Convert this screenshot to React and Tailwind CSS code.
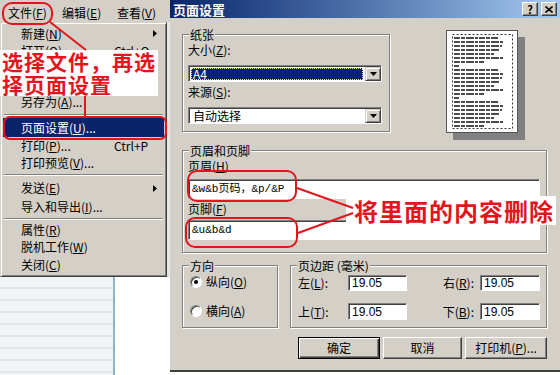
import React from "react";

const RED = "#e3141c";

function Arrow() {
  return (
    <svg width="4" height="7" viewBox="0 0 4 7" className="ml-auto mr-[5px]">
      <path d="M0 0L4 3.5L0 7Z" fill="#000" />
    </svg>
  );
}

function MI({ h, label, k, tail = "", shortcut, arrow, active }) {
  return (
    <div
      className={`${h} flex items-center pl-[18px] pr-[2px] whitespace-nowrap ${
        active ? "bg-[#0a246a] text-white" : ""
      }`}
    >
      <span className="w-[93px]">
        {label}(<span className="underline">{k}</span>){tail}
      </span>
      {shortcut && <span>{shortcut}</span>}
      {arrow && <Arrow />}
    </div>
  );
}

function Sep({ h }) {
  return (
    <div className={`${h} flex items-center px-[1px]`}>
      <div className="w-full h-[2px] border-t border-t-[#808080] border-b border-b-white" />
    </div>
  );
}

function Group({ title, className, children }) {
  return (
    <div
      className={`relative border border-[#808080] shadow-[inset_1px_1px_0_#fff,1px_1px_0_#fff] ${className}`}
    >
      <span className="absolute -top-[6px] left-[6px] px-[1px] bg-[#d4d0c8] leading-[12px] whitespace-nowrap">
        {title}
      </span>
      {children}
    </div>
  );
}

function DropBtn() {
  return (
    <div className="w-[16px] h-full bg-[#d4d0c8] border border-t-[#d4d0c8] border-l-[#d4d0c8] border-r-[#404040] border-b-[#404040] shadow-[inset_1px_1px_0_#fff,inset_-1px_-1px_0_#808080] flex items-center justify-center">
      <svg width="7" height="4" viewBox="0 0 7 4">
        <path d="M0 0H7L3.5 4Z" fill="#000" />
      </svg>
    </div>
  );
}

function Select({ value, active }) {
  return (
    <div className="h-[17px] flex bg-white border border-t-[#808080] border-l-[#808080] border-b-white border-r-white shadow-[inset_1px_1px_0_#404040] pt-[1px] pl-[1px]">
      <div className="flex-1 p-[1px] pr-[2px]">
        <div
          className={`h-full flex items-center pl-[2px] ${
            active ? "bg-[#0a246a] text-white outline-1 outline-dotted outline-[#f0e68c] -outline-offset-1" : ""
          }`}
        >
          {value}
        </div>
      </div>
      <DropBtn />
    </div>
  );
}

function Input({ h, w, children, mono }) {
  return (
    <div
      className={`${h} ${w} bg-white border border-t-[#808080] border-l-[#808080] border-b-white border-r-white shadow-[inset_1px_1px_0_#404040] flex items-center pl-[3px] whitespace-nowrap ${
        mono ? "text-[11px] [font-family:'Liberation_Mono','Noto_Sans_CJK_SC',monospace]" : "[font-family:'Liberation_Sans','Noto_Sans_CJK_SC',sans-serif]"
      }`}
    >
      {children}
    </div>
  );
}

function Radio({ on }) {
  return (
    <span className="w-[12px] h-[12px] rounded-full bg-white border border-t-[#808080] border-l-[#808080] border-b-white border-r-white shadow-[inset_1px_1px_0_#404040] flex items-center justify-center">
      {on && <span className="w-[4px] h-[4px] rounded-full bg-black" />}
    </span>
  );
}

function Btn({ w, children, def }) {
  return (
    <div
      className={`${w} h-[22px] bg-[#d4d0c8] flex items-center justify-center border ${
        def
          ? "border-black shadow-[inset_1px_1px_0_#fff,inset_-1px_-1px_0_#404040,inset_-2px_-2px_0_#808080]"
          : "border-t-white border-l-white border-r-[#404040] border-b-[#404040] shadow-[inset_-1px_-1px_0_#808080]"
      }`}
    >
      {children}
    </div>
  );
}

function TitleBtn({ children }) {
  return (
    <div className="w-[16px] h-[14px] bg-[#d4d0c8] border border-t-white border-l-white border-r-[#404040] border-b-[#404040] shadow-[inset_-1px_-1px_0_#808080] flex items-center justify-center text-[11px] font-bold text-black leading-none">
      {children}
    </div>
  );
}

function Preview() {
  const lens = [44, 50, 48, 46, 40, 50, 30, 5, 44, 50, 48, 46, 40, 50, 30, 5, 44, 50, 48, 46, 40, 50, 30];
  return (
    <svg width="79" height="110" viewBox="0 0 79 110">
      <rect x="7" y="7" width="72" height="103" fill="#808080" />
      <rect x="0.5" y="0.5" width="71" height="102" fill="#fff" stroke="#555" />
      <rect x="6.5" y="4.5" width="60" height="94" fill="none" stroke="#333" strokeDasharray="2 2" />
      {lens.map((l, i) => (
        <line
          key={i}
          x1="8"
          x2={8 + l}
          y1={8 + i * 4}
          y2={8 + i * 4}
          stroke="#111"
          strokeWidth="1.5"
          strokeDasharray="6 1 4 1 8 1 3 1"
        />
      ))}
    </svg>
  );
}

export default function App() {
  return (
    <div className="relative w-[560px] h-[375px] overflow-hidden flex bg-white text-[12px] leading-none text-black [font-family:'Noto_Sans_CJK_SC','Noto_Sans',sans-serif]">
      {/* left: menu */}
      <div className="w-[170px] shrink-0 flex flex-col">
        <div className="h-[22px] bg-[#d4d0c8] flex items-center pl-[8px] pt-[3px]">
          <span className="w-[54px]">
            文件(<span className="underline">F</span>)
          </span>
          <span className="w-[55px]">
            编辑(<span className="underline">E</span>)
          </span>
          <span>
            查看(<span className="underline">V</span>)
          </span>
        </div>
        <div className="flex">
          <div className="w-[167px] bg-[#d4d0c8] border border-t-[#d4d0c8] border-l-[#d4d0c8] border-r-[#404040] border-b-[#404040] shadow-[inset_1px_1px_0_#fff,inset_-1px_-1px_0_#808080] p-[2px] flex flex-col">
            <MI h="h-[17px]" label="新建" k="N" arrow />
            <MI h="h-[17px]" label="打开" k="O" tail="..." shortcut="Ctrl+O" />
            <div className="h-[34px]" />
            <MI h="h-[18px]" label="另存为" k="A" tail="..." />
            <Sep h="h-[7px]" />
            <MI h="h-[19px]" label="页面设置" k="U" tail="..." active />
            <MI h="h-[17px]" label="打印" k="P" tail="..." shortcut="Ctrl+P" />
            <MI h="h-[17px]" label="打印预览" k="V" tail="..." />
            <Sep h="h-[8px]" />
            <MI h="h-[18px]" label="发送" k="E" arrow />
            <MI h="h-[19px]" label="导入和导出" k="I" tail="..." />
            <Sep h="h-[5px]" />
            <MI h="h-[17px]" label="属性" k="R" />
            <MI h="h-[18px]" label="脱机工作" k="W" />
            <MI h="h-[18px]" label="关闭" k="C" />
          </div>
          <div className="flex-1 bg-[#e9e7e2]" />
        </div>
        <div className="flex-1 flex">
          <div className="w-[113px] bg-[repeating-linear-gradient(180deg,#f3f4f8_0px,#f3f4f8_10px,#e2e5ee_10px,#e2e5ee_12px)]" />
          <div className="w-[2px] bg-[#8db3c6]" />
          <div className="flex-1 bg-white" />
        </div>
      </div>

      {/* dialog */}
      <div className="w-[390px] shrink-0 h-[372px] bg-[#d4d0c8] flex flex-col border-b-2 border-b-[#404040]">
        <div className="h-[18px] bg-linear-to-r from-[#0a246a] to-[#a6caf0] flex items-center pl-[3px] pr-[3px]">
          <span className="text-white font-bold text-[13px]">页面设置</span>
          <div className="ml-auto flex gap-[3px]">
            <TitleBtn>?</TitleBtn>
            <TitleBtn>
              <svg width="8" height="7" viewBox="0 0 8 7">
                <path d="M0.5 0.5L7.5 6.5M7.5 0.5L0.5 6.5" stroke="#000" strokeWidth="1.6" />
              </svg>
            </TitleBtn>
          </div>
        </div>

        <div className="flex-1 flex flex-col pl-[12px] pr-[13px]">
          {/* row 1 */}
          <div className="h-[122px] flex items-start">
            <Group title="纸张" className="mt-[16px] w-[208px] h-[98px]">
              <div className="pt-[9px] pl-[5px] pr-[7px] flex flex-col">
                <div className="h-[12px]">
                  大小(<span className="underline">Z</span>):
                </div>
                <div className="mt-[9px]">
                  <Select value="A4" active />
                </div>
                <div className="h-[12px] mt-[4px]">
                  来源(<span className="underline">S</span>):
                </div>
                <div className="mt-[9px]">
                  <Select value="自动选择" />
                </div>
              </div>
            </Group>
            <div className="mt-[12px] ml-[56px]">
              <Preview />
            </div>
          </div>

          {/* row 2 */}
          <Group title="页眉和页脚" className="mt-[10px] h-[103px]">
            <div className="pt-[9px] pl-[5px] pr-[6px] flex flex-col">
              <div className="h-[12px]">
                页眉(<span className="underline">H</span>)
              </div>
              <div className="mt-[7px]">
                <Input h="h-[20px]" w="w-full" mono>
                  &amp;w&amp;b页码，&amp;p/&amp;P
                </Input>
              </div>
              <div className="h-[12px] mt-[4px]">
                页脚(<span className="underline">F</span>)
              </div>
              <div className="mt-[5px]">
                <Input h="h-[20px]" w="w-full" mono>
                  &amp;u&amp;b&amp;d
                </Input>
              </div>
            </div>
          </Group>

          {/* row 3 */}
          <div className="mt-[12px] h-[63px] flex gap-[12px]">
            <Group title="方向" className="w-[96px] h-[63px]">
              <div className="pt-[10px] pl-[7px] flex flex-col">
                <div className="h-[12px] flex items-center gap-[4px]">
                  <Radio on />
                  <span>
                    纵向(<span className="underline">O</span>)
                  </span>
                </div>
                <div className="h-[12px] mt-[17px] flex items-center gap-[4px]">
                  <Radio />
                  <span>
                    横向(<span className="underline">A</span>)
                  </span>
                </div>
              </div>
            </Group>
            <Group title="页边距 (毫米)" className="flex-1 h-[63px]">
              <div className="pt-[9px] pl-[7px] flex flex-col">
                <div className="h-[16px] flex items-center">
                  <span className="w-[50px]">
                    左(<span className="underline">L</span>):
                  </span>
                  <Input h="h-[16px]" w="w-[59px]">19.05</Input>
                  <span className="w-[69px] text-right pr-[2px]">
                    右(<span className="underline">R</span>):
                  </span>
                  <div className="ml-[4px]">
                    <Input h="h-[16px]" w="w-[60px]">19.05</Input>
                  </div>
                </div>
                <div className="h-[17px] mt-[12px] flex items-center">
                  <span className="w-[50px]">
                    上(<span className="underline">T</span>):
                  </span>
                  <Input h="h-[17px]" w="w-[59px]">19.05</Input>
                  <span className="w-[69px] text-right pr-[2px]">
                    下(<span className="underline">B</span>):
                  </span>
                  <div className="ml-[4px]">
                    <Input h="h-[17px]" w="w-[60px]">19.05</Input>
                  </div>
                </div>
              </div>
            </Group>
          </div>

          {/* row 4 */}
          <div className="mt-[9px] flex justify-end gap-[3px]">
            <Btn w="w-[82px]" def>
              确定
            </Btn>
            <Btn w="w-[79px]">取消</Btn>
            <Btn w="w-[82px]">
              打印机(<span className="underline">P</span>)...
            </Btn>
          </div>
        </div>
      </div>

      {/* annotations */}
      <div className="absolute left-[2px] top-[2px] w-[51px] h-[23px] border-2 border-[#e3141c] rounded-[10px]" />
      <div className="absolute left-[3px] top-[116px] w-[164px] h-[24px] border-2 border-[#e3141c] rounded-[7px]" />
      <div className="absolute left-[187px] top-[170px] w-[110px] h-[32px] border-2 border-[#e3141c] rounded-[10px]" />
      <div className="absolute left-[185px] top-[217px] w-[113px] h-[31px] border-2 border-[#e3141c] rounded-[10px]" />

      <div className="absolute left-0 top-[50px] w-[158px] h-[46px] bg-white pl-[2px] text-[21px] leading-[23px] font-bold tracking-[1px] text-[#e3141c]">
        <div>选择文件，再选</div>
        <div>择页面设置</div>
      </div>

      <div className="absolute left-[346px] top-[196px] w-[210px] h-[29px] bg-white flex items-center pl-[8px] text-[24px] leading-none font-bold tracking-[1px] text-[#e3141c]">
        将里面的内容删除
      </div>

      <svg className="absolute left-0 top-0 pointer-events-none" width="560" height="375" viewBox="0 0 560 375">
        <line x1="50" y1="22" x2="86" y2="50" stroke={RED} strokeWidth="2" />
        <line x1="85" y1="96" x2="85" y2="117" stroke={RED} strokeWidth="2" />
        <line x1="297" y1="188" x2="353" y2="208" stroke={RED} strokeWidth="2" />
        <line x1="298" y1="233" x2="353" y2="213" stroke={RED} strokeWidth="2" />
      </svg>
    </div>
  );
}
